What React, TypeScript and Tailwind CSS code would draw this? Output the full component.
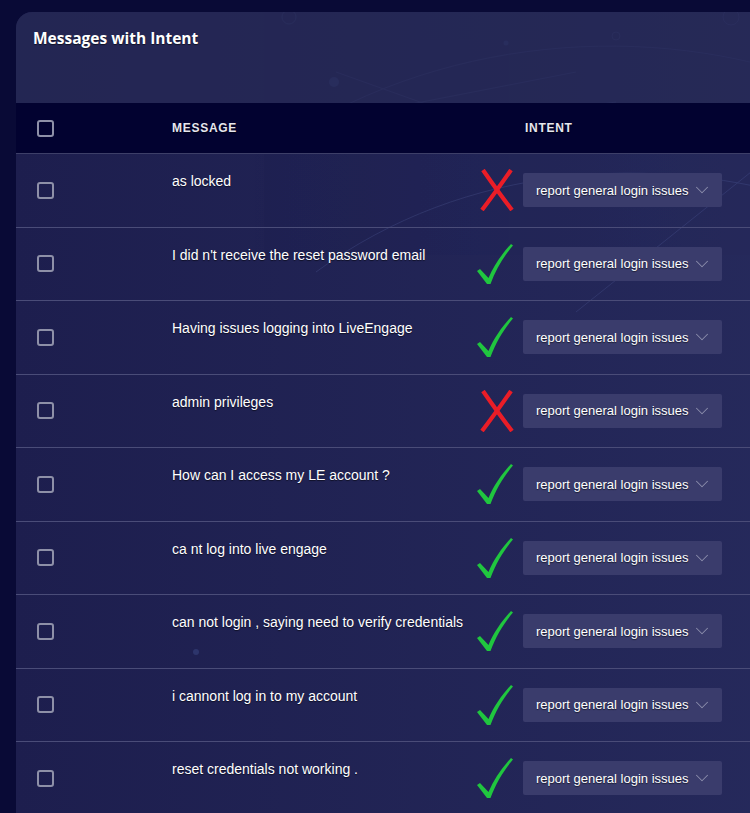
import React from 'react';
import { ChevronDown } from 'lucide-react';

type Row = { id: number; text: string; ok: boolean };

const rows: Row[] = [
  { id: 1, text: 'as locked', ok: false },
  { id: 2, text: "I did n't receive the reset password email", ok: true },
  { id: 3, text: 'Having issues logging into LiveEngage', ok: true },
  { id: 4, text: 'admin privileges', ok: false },
  { id: 5, text: 'How can I access my LE account ?', ok: true },
  { id: 6, text: 'ca nt log into live engage', ok: true },
  { id: 7, text: 'can not login , saying need to verify credentials', ok: true },
  { id: 8, text: 'i cannont log in to my account', ok: true },
  { id: 9, text: 'reset credentials not working .', ok: true },
];

function Cross() {
  return (
    <svg width="34" height="42" viewBox="0 0 34 42" className="block">
      <path d="M3 1 C 12 14, 22 28, 32 41" stroke="#ea1d27" strokeWidth="4.2" fill="none" />
      <path d="M31 1 C 22 14, 12 28, 2 41" stroke="#ea1d27" strokeWidth="4.2" fill="none" />
    </svg>
  );
}

function Check() {
  return (
    <svg width="38" height="44" viewBox="0 0 38 44" className="block">
      <path
        d="M1 29 L4 27 L12.5 36 C 18 23, 26 12, 35 2 L37 3.5 C 28 14, 20 27, 14.5 42 L 11 42 Z"
        fill="#20c63f"
      />
    </svg>
  );
}

function Box() {
  return <div className="w-[17px] h-[17px] rounded-[3px] border-2 border-[#8e90a8] bg-transparent" />;
}

export default function App() {
  return (
    <div
      className="h-[813px] overflow-hidden bg-[#090a36] pl-[16px] pt-[12px] [text-shadow:0_1px_1px_rgba(0,0,0,0.55)]"
      style={{ fontFamily: '"Liberation Sans", Arial, sans-serif' }}
    >
      <div className="relative w-[800px] rounded-tl-[16px] overflow-hidden bg-gradient-to-r from-[#1d1e4e] to-[#262a5c]">
        {/* background decoration */}
        <svg className="absolute inset-0 pointer-events-none" width="800" height="820" viewBox="0 0 800 820">
          <g stroke="#4a5590" strokeWidth="1" fill="none" opacity="0.35">
            <path d="M250 140 C 420 20, 640 10, 800 70" />
            <path d="M300 260 C 450 150, 640 140, 800 190" />
            <path d="M380 95 L 560 60" />
            <path d="M320 60 L 460 110 L 600 90" />
            <path d="M560 300 L 760 140" />
            <circle cx="273" cy="5" r="7" />
            <circle cx="600" cy="24" r="4" />
            <circle cx="715" cy="5" r="8" />
          </g>
          <g fill="#3b4a85" opacity="0.5">
            <circle cx="318" cy="70" r="5" />
            <circle cx="490" cy="31" r="2.5" />
            <circle cx="180" cy="640" r="3" />
            <circle cx="520" cy="390" r="4" />
          </g>
        </svg>

        {/* title */}
        <div className="relative h-[91px] bg-[#262a56]/70 px-[17px] pt-[15px]">
          <h1
            className="text-[15.5px] font-bold text-white"
            style={{ fontFamily: '"Open Sans", sans-serif' }}
          >
            Messages with Intent
          </h1>
        </div>

        {/* table header */}
        <div className="relative flex items-center h-[51px] bg-[#020230] border-b border-[#3d3f68]">
          <div className="w-[156px] pl-[21px]">
            <Box />
          </div>
          <div className="w-[353px] text-[12px] font-bold tracking-[0.06em] text-[#e6e6ee]">MESSAGE</div>
          <div className="text-[12px] font-bold tracking-[0.06em] text-[#e6e6ee]">INTENT</div>
        </div>

        {/* rows */}
        {rows.map((r) => (
          <div key={r.id} className="relative flex h-[73.5px] border-b border-[#4a4c78]">
            <div className="w-[156px] pl-[21px] flex items-center">
              <Box />
            </div>
            <div className="w-[351px] flex justify-between">
              <p className="pt-[17px] text-[14px] text-white">{r.text}</p>
              <div className="flex items-center pr-[9px]">{r.ok ? <Check /> : <Cross />}</div>
            </div>
            <div className="flex items-center">
              <div className="flex items-center justify-between w-[199px] h-[34px] rounded-[2px] bg-[#3a3c6c] pl-[13px] pr-[9px]">
                <span className="text-[13px] text-white">report general login issues</span>
                <ChevronDown className="w-[22px] h-[22px] text-[#8b8dab]" strokeWidth={1.1} />
              </div>
            </div>
          </div>
        ))}
      </div>
    </div>
  );
}
